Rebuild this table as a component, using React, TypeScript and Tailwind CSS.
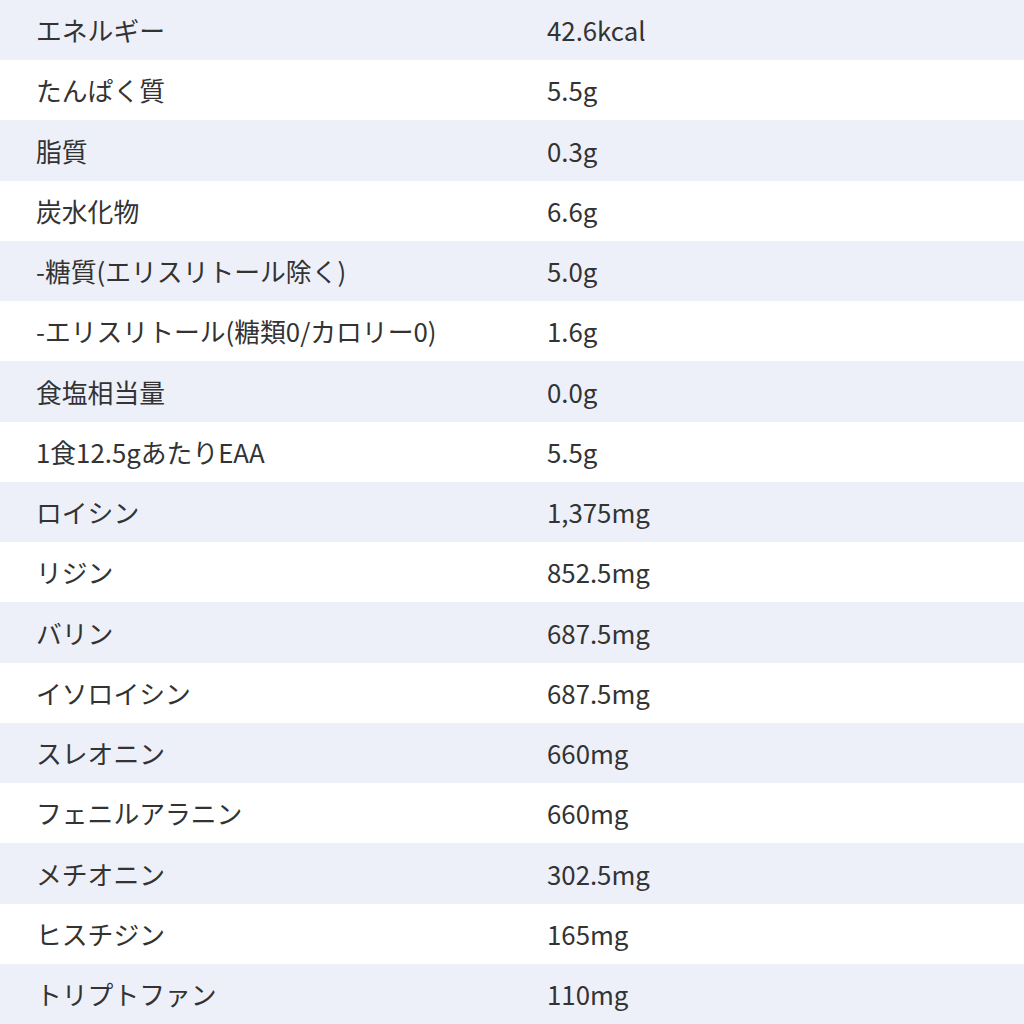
import React from "react";

const ROWS: [string, string][] = [
  ["エネルギー", "42.6kcal"],
  ["たんぱく質", "5.5g"],
  ["脂質", "0.3g"],
  ["炭水化物", "6.6g"],
  ["-糖質(エリスリトール除く)", "5.0g"],
  ["-エリスリトール(糖類0/カロリー0)", "1.6g"],
  ["食塩相当量", "0.0g"],
  ["1食12.5gあたりEAA", "5.5g"],
  ["ロイシン", "1,375mg"],
  ["リジン", "852.5mg"],
  ["バリン", "687.5mg"],
  ["イソロイシン", "687.5mg"],
  ["スレオニン", "660mg"],
  ["フェニルアラニン", "660mg"],
  ["メチオニン", "302.5mg"],
  ["ヒスチジン", "165mg"],
  ["トリプトファン", "110mg"],
];

export default function App() {
  return (
    <div className="w-[1024px] bg-white font-['Noto_Sans_CJK_JP','Noto_Sans',sans-serif] text-[25.8px] text-[#333333]">
      {ROWS.map(([label, value], idx) => (
        <div
          key={label}
          className={
            idx % 2 === 0
              ? "grid grid-cols-2 h-[60.24px] items-center bg-[#eef0f9]"
              : "grid grid-cols-2 h-[60.24px] items-center bg-white"
          }
        >
          <div className="pl-[36px] leading-none">{label}</div>
          <div className="pl-[35px] leading-none">{value}</div>
        </div>
      ))}
    </div>
  );
}
